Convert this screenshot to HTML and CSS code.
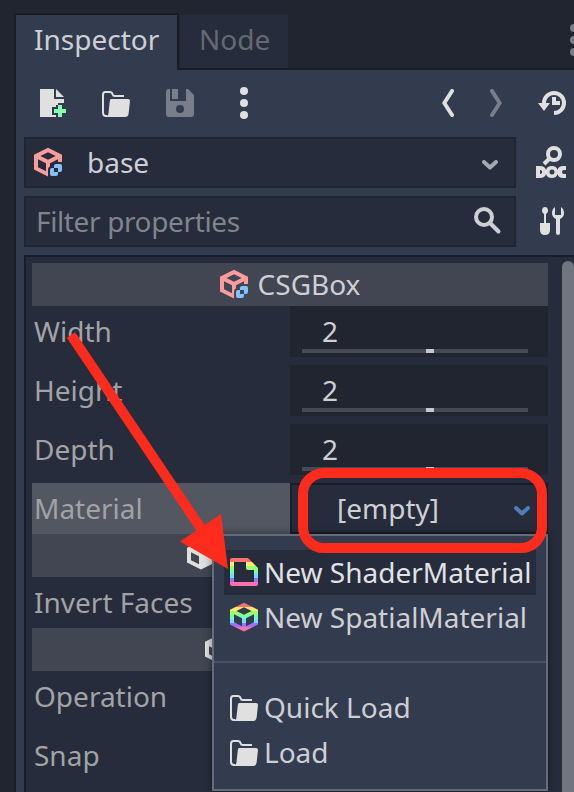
FILE: index.html
```html
<!DOCTYPE html>
<html lang="en">
<head>
<meta charset="utf-8">
<title>Inspector</title>
<link rel="stylesheet" href="styles.css">
</head>
<body>
<svg class="defs" width="0" height="0" aria-hidden="true">
  <defs>
    <linearGradient id="rainbow" gradientUnits="userSpaceOnUse" x1="0" y1="1" x2="0" y2="15">
      <stop offset="0.1429" stop-color="#ff7070"/><stop offset="0.1429" stop-color="#ffeb70"/>
      <stop offset="0.2857" stop-color="#ffeb70"/><stop offset="0.2857" stop-color="#9dff70"/>
      <stop offset="0.4286" stop-color="#9dff70"/><stop offset="0.4286" stop-color="#70ffb9"/>
      <stop offset="0.5714" stop-color="#70ffb9"/><stop offset="0.5714" stop-color="#70deff"/>
      <stop offset="0.7143" stop-color="#70deff"/><stop offset="0.7143" stop-color="#9f70ff"/>
      <stop offset="0.8571" stop-color="#9f70ff"/><stop offset="0.8571" stop-color="#ff70ac"/>
    </linearGradient>
    <mask id="linkCut" maskUnits="userSpaceOnUse" x="0" y="0" width="16" height="16">
      <path fill="#fff" d="M0 0h16v16H0z"/>
      <path fill="#000" d="M12 8h4v8H8v-4q0-2 2-2h.7q.1-2 1.3-2z"/>
    </mask>
  </defs>
  <symbol id="cube" viewBox="0 0 16 16">
    <path fill-rule="evenodd" d="M8 .9 1 4.400v7.300L8 15.200l7-3.500V4.400zm0 2.200L11.800 5 8 6.900 4.200 5zM3 6.600l4 2v4L3 10.600zm10 0v4l-4 2v-4z"/>
  </symbol>
  <symbol id="solid" viewBox="0 0 16 16">
    <path fill-rule="evenodd" d="M8 .9 1 4.400v7.300L8 15.200l7-3.500V4.400zM3 6.600l4 2v4L3 10.600z"/>
  </symbol>
  <symbol id="csgbox" viewBox="0 0 16 16">
    <g mask="url(#linkCut)"><use href="#cube" width="16" height="16" fill="#fc9c9c"/></g>
    <path fill="#84c2ff" fill-rule="evenodd" d="M12 9h2q1 0 1 1v2q0 1-1 1h-1v1q0 1-1 1h-2q-1 0-1-1v-2q0-1 1-1h1v-1q0-1 1-1zm-1 2v2h2v-2z"/>
  </symbol>
  <symbol id="folder" viewBox="0 0 16 16">
    <path fill="none" stroke="#e0e0e0" d="M3.700 14.500H3q-1.500 0-1.500-1.600V4q0-1.500 1.200-1.500h2.100q1.200 0 1.500 1.100.2.900 1.100.9H12"/>
    <path fill="#e0e0e0" d="M5.600 6H14q1 0 1 1l-.7 6.400Q14 15 12.500 15H2.700q1.300-.1 1.500-1.500L4.900 7q.1-1 .7-1z"/>
  </symbol>
  <symbol id="chevron" viewBox="0 0 16 10">
    <path fill="none" stroke="currentColor" stroke-width="4" stroke-linecap="round" stroke-linejoin="round" d="m2 2 6 5.500L14 2"/>
  </symbol>
</svg>

<div class="dock">
  <div class="tabs">
    <div class="tab tab-active">Inspector</div>
    <div class="tab">Node</div>
    <svg class="dock-menu" width="8" height="32" viewBox="0 0 8 32" fill="#797c84"><circle cx="4" cy="4" r="4"/><circle cx="4" cy="16" r="4"/><circle cx="4" cy="28" r="4"/></svg>
  </div>

  <div class="body">
    <div class="toolbar">
      <svg class="icon" viewBox="0 0 16 16"><path fill="#e0e0e0" d="M2 1v14h8v-1H8v-4h2V9h1V8h3V6H9V1zm8 0v4h4z"/><path fill="#84ffb1" d="M11 9v2H9v2h2v2h2v-2h2v-2h-2V9z"/></svg>
      <svg class="icon"><use href="#folder"/></svg>
      <svg class="icon" viewBox="0 0 16 16"><path fill="#797e8a" fill-rule="evenodd" d="M2.500 1H3v6h8V1h1l3 3v9.500q0 1.500-1.500 1.500h-11Q1 15 1 13.500v-11Q1 1 2.500 1zM4 1h3v5H4zm4 8a2 2 0 1 0 0 4 2 2 0 0 0 0-4z"/></svg>
      <svg class="icon" viewBox="0 0 32 32" fill="#e0e0e0"><circle cx="16" cy="4" r="4"/><circle cx="16" cy="16" r="4"/><circle cx="16" cy="28" r="4"/></svg>
      <span class="spacer"></span>
      <svg class="nav" viewBox="0 0 12 28"><path stroke="#e0e0e0" d="M10 2 2.300 14 10 26"/></svg>
      <svg class="nav" viewBox="0 0 12 28"><path stroke="#797e8a" d="m2 2 7.700 12L2 26"/></svg>
      <svg class="icon history" viewBox="0 0 32 32"><path fill="none" stroke="#e0e0e0" stroke-width="4" d="M8 17v-1a10 10 0 1 1 10 10"/><path fill="#e0e0e0" d="M2 16h12l-6 8zM16 10h4v4h4v4h-8z"/></svg>
    </div>

    <div class="field-row">
      <div class="field object">
        <svg class="icon raised"><use href="#csgbox"/></svg>
        <span class="object-name">base</span>
        <svg class="chev"><use href="#chevron"/></svg>
      </div>
      <svg class="icon raised" viewBox="0 0 32 32">
        <circle cx="19" cy="8" r="6" fill="none" stroke="#e0e0e0" stroke-width="4"/>
        <path stroke="#e0e0e0" stroke-width="4" d="m15 12-6 6"/>
        <path fill="#e0e0e0" fill-rule="evenodd" d="M1 20h4q5 0 6 4 1-4 6-4 4.500 0 5.500 4 1-4 5.500-4h3v4h-2q-2 0-2 2t2 2h2v4h-3q-4.500 0-5.500-4-1 4-5.500 4-5 0-6-4-1 4-6 4H1zm4 4v4q2.200 0 2.200-2T5 24zm12-.5a2.500 2.500 0 1 0 0 5 2.500 2.500 0 0 0 0-5z"/>
      </svg>
    </div>

    <div class="field-row">
      <div class="field filter">
        <span>Filter properties</span>
        <svg class="search" viewBox="0 0 28 28"><circle cx="10" cy="10" r="8" fill="none" stroke="#cdcfd2" stroke-width="4"/><path stroke="#cdcfd2" stroke-width="4" stroke-linecap="round" d="m16 16 8.500 8.500"/></svg>
      </div>
      <svg class="icon raised" viewBox="0 0 32 32">
        <path fill="#e0e0e0" d="M10 2q3 0 3 4 0 2-2 3v9h4v7q0 5-5 5t-5-5v-7h4V9q-2-1-2-3 0-4 3-4zM20 2v8h6V2q3 2 3 6 0 4-4 6v14q0 2-2 2t-2-2V14q-4-2-4-6 0-4 3-6z"/>
      </svg>
    </div>

    <div class="props">
      <div class="section section-title"><svg class="icon raised"><use href="#csgbox"/></svg><span>CSGBox</span></div>
      <div class="rows">
        <div class="row"><span class="label">Width</span><div class="spin">2<div class="track"><i></i></div></div></div>
        <div class="row"><span class="label">Height</span><div class="spin">2<div class="track"><i></i></div></div></div>
        <div class="row"><span class="label">Depth</span><div class="spin">2<div class="track"><i></i></div></div></div>
        <div class="row row-active"><span class="label">Material</span><div class="picker"><span>[empty]</span><svg class="chev"><use href="#chevron"/></svg></div></div>
      </div>
      <div class="section section-shape"><svg class="icon raised" fill="#e0e0e0"><use href="#solid"/></svg></div>
      <div class="rows"><div class="row"><span class="label">Invert Faces</span></div></div>
      <div class="section section-node"><svg class="icon raised" fill="#e0e0e0"><use href="#solid"/></svg></div>
      <div class="rows">
        <div class="row"><span class="label">Operation</span></div>
        <div class="row"><span class="label">Snap</span></div>
      </div>
      <div class="scrollbar"></div>
    </div>
  </div>
</div>

<div class="popup">
  <div class="item item-hover"><svg class="icon raised" viewBox="0 0 16 16"><path fill="url(#rainbow)" fill-rule="evenodd" d="M2 1h8l5 5v8q0 1-1 1H2q-1 0-1-1V2q0-1 1-1zm1 2v10h10V7h-3q-1 0-1-1V3z"/></svg><span>New ShaderMaterial</span></div>
  <div class="item"><svg class="icon raised" viewBox="0 0 16 16"><path fill="url(#rainbow)" fill-rule="evenodd" d="M8 .9 1 4.400v7.300l7 3.500 7-3.500V4.400zm0 2.200L11.800 5 8 6.900 4.200 5zM3 6.600l4 2v4L3 10.600zm10 0v4l-4 2v-4z"/></svg><span>New SpatialMaterial</span></div>
  <div class="separator"></div>
  <div class="item"><svg class="icon raised"><use href="#folder"/></svg><span>Quick Load</span></div>
  <div class="item"><svg class="icon raised"><use href="#folder"/></svg><span>Load</span></div>
</div>

<svg class="annotations" viewBox="0 0 574 792">
  <rect x="303" y="473" width="239" height="75" rx="21" fill="none" stroke="#ff2b1d" stroke-width="10"/>
  <path stroke="#ff2b1d" stroke-width="10" d="m71 335 137 204"/>
  <path fill="#ff2b1d" d="m228 569-7-55-41 27.500z"/>
</svg>
</body>
</html>
```
FILE: styles.css
```css
* { box-sizing: border-box; }

body {
  margin: 0;
  width: 574px;
  height: 792px;
  overflow: hidden;
  position: relative;
  background: #21252f;
  color: #cdcfd5;
  font: 28px/51px "Noto Sans", sans-serif;
  white-space: nowrap;
}

svg { display: block; flex: none; }
.defs { position: absolute; }
.icon { width: 32px; height: 32px; }
.raised { margin-bottom: 2px; }
.spacer { flex: 1; }

.dock { padding: 13px 0 0 14px; }

.tabs {
  display: flex;
  height: 57px;
  align-items: flex-start;
  background: linear-gradient(#191d28, #191d28) 163px 55px / 100% 2px no-repeat;
}
.tab {
  width: 108px;
  height: 55px;
  margin-left: 1px;
  text-indent: 19px;
  line-height: 49px;
  background: #262c3b;
  border-top: 2px solid #21252f;
  color: #656973;
}
.tab-active {
  width: 165px;
  height: 57px;
  margin-left: 0;
  text-indent: 18px;
  background: #333b4f;
  border: 2px solid #191d28;
  border-bottom: 0;
  color: #cdcfd5;
}
.dock-menu { margin: 11px -4px 0 auto; }

.body {
  height: 722px;
  padding: 17px 0 0 8px;
  background: #333b4f;
  border-left: 2px solid #191d28;
}

.toolbar { display: flex; align-items: center; height: 32px; padding: 0 6px 0 12px; margin-bottom: 18px; gap: 32px; }
.toolbar .spacer { margin-right: -32px; }
.nav { width: 12px; height: 28px; fill: none; stroke-width: 4; stroke-linecap: round; stroke-linejoin: round; margin-right: 4px; }
.history { margin-left: -2px; }

.field-row { display: flex; align-items: center; gap: 19px; height: 51px; margin-bottom: 8px; }
.field {
  display: flex;
  align-items: center;
  width: 492px;
  height: 51px;
  background: #262c3b;
  border: 2px solid #21252f;
}
.object { padding: 0 16px 0 6px; }
.object-name { flex: 1; margin-left: 23px; }
.chev { width: 16px; height: 10px; color: #a5a8ae; margin-top: 4px; }
.filter { justify-content: space-between; padding: 0 12px 0 10px; color: #80848d; letter-spacing: -0.37px; }
.search { width: 28px; height: 28px; margin-top: -2px; }

.props {
  position: relative;
  height: 537px;
  padding: 6px 26px 0 6px;
  background: #262c3b;
  border: 2px solid #191d28;
  border-width: 2px 0 0 2px;
}
.section {
  display: flex;
  align-items: center;
  justify-content: center;
  gap: 8px;
  height: 43px;
  background: #414652;
  line-height: 43px;
}
.section-title { padding-right: 2px; }
.section-shape { justify-content: flex-start; padding-left: 153px; }
.section-node { justify-content: flex-start; padding-left: 171px; }
.rows { display: flex; flex-direction: column; gap: 8px; }
.row { display: grid; grid-template-columns: 1fr 1fr; height: 51px; }
.label { padding-left: 2px; color: #a1a3a6; }
.row-active .label { background: #535761; }
.spin { display: flex; flex-direction: column; background: #21252f; padding: 0 20px 0 12px; text-indent: 20px; }
.track { height: 4px; flex: none; margin-top: -8px; background: #464a54; }
.track i { display: block; width: 8px; height: 4px; margin-left: 124px; background: #c7c8cf; }
.picker { display: flex; align-items: center; justify-content: space-between; border: 2px solid #191d28; padding: 0 16px 0 45px; line-height: 47px; }
.picker .chev { color: #4f7db8; margin-top: 5px; }
.scrollbar { position: absolute; right: 0; top: 4px; bottom: 0; width: 12px; background: #71757f; border-radius: 6px 6px 0 0; }

.popup {
  position: absolute;
  left: 212px;
  top: 534px;
  width: 336px;
  height: 257px;
  padding: 14px 0;
  background: #333b4f;
  border: 2px solid #646b7b;
  box-shadow: 0 0 8px rgba(0, 0, 0, 0.45);
}
.item { display: flex; align-items: center; gap: 4px; height: 45px; margin: 0 10px; padding-left: 4px; line-height: 45px; }
.item-hover { background: #262c3b; color: #e0e2e7; }
.separator { height: 2px; margin: 21px 0 22px; background: #4b5263; }

.annotations { position: absolute; left: 0; top: 0; width: 574px; height: 792px; }
```
